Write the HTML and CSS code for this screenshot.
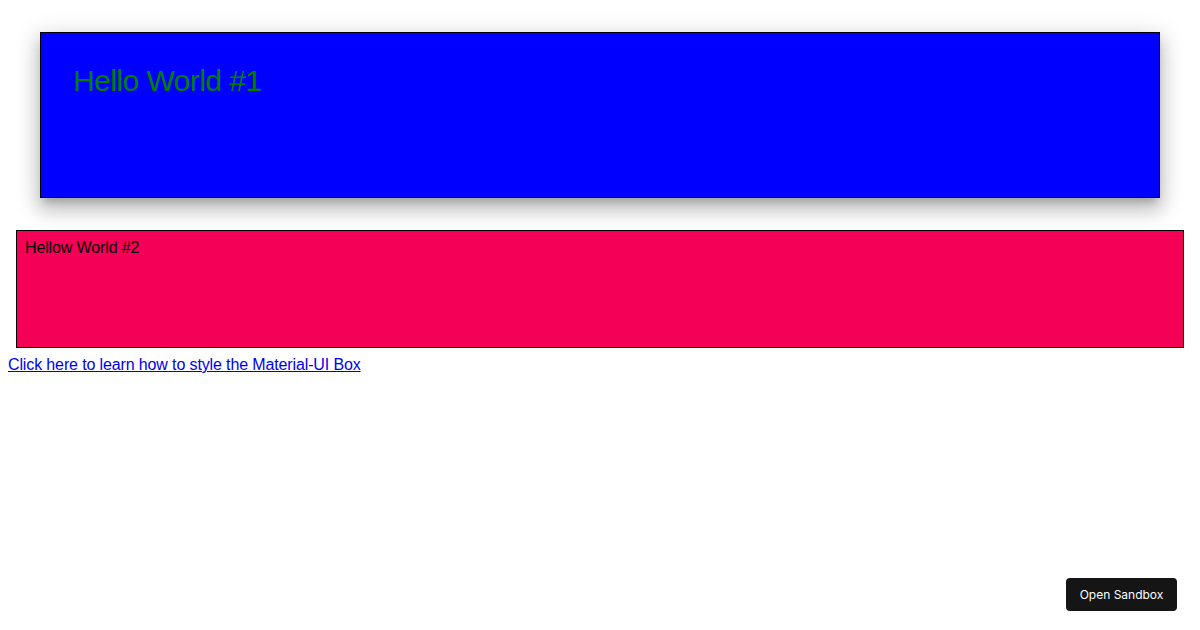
FILE: index.html
```html
<!DOCTYPE html>
<html>
<head>
<meta charset="utf-8">
<link rel="stylesheet" href="styles.css">
</head>
<body>
<div class="box-one">Hello World #1</div>
<div class="box-two">Hellow World #2</div>
<a class="learn-link" href="#">Click here to learn how to style the Material-UI Box</a>
<a class="sandbox-btn" href="#">Open Sandbox</a>
</body>
</html>
```
FILE: styles.css
```css
html {
  margin: 0;
  padding: 0;
}
body {
  margin: 0 8px 8px;
  padding: 0;
  font-family: "Liberation Sans", Arial, sans-serif;
  font-size: 16px;
  letter-spacing: -0.008em;
  background: #fff;
}
.box-one {
  margin: 32px;
  padding: 32px;
  height: 100px;
  border: 1px solid #000;
  background: #0000ff;
  color: #008000;
  font-size: 30px;
  line-height: 32px;
  letter-spacing: -0.55px;
  box-shadow: 0px 7px 8px -4px rgba(0,0,0,0.22), 0px 12px 17px 2px rgba(0,0,0,0.15), 0px 5px 22px 4px rgba(0,0,0,0.12);
}
.box-two {
  margin: 8px;
  padding: 8px;
  height: 100px;
  border: 1px solid #000;
  background: #f50057;
  color: #000;
}
.learn-link {
  color: #0000ee;
  text-decoration: underline;
}
.sandbox-btn {
  position: fixed;
  right: 23px;
  bottom: 19px;
  height: 33px;
  width: 111px;
  box-sizing: border-box;
  display: flex;
  align-items: center;
  justify-content: center;
  background: #151515;
  color: #fff;
  border-radius: 4px;
  font-family: Inter, "Liberation Sans", sans-serif;
  font-size: 12px;
  letter-spacing: 0;
  text-decoration: none;
}
```
